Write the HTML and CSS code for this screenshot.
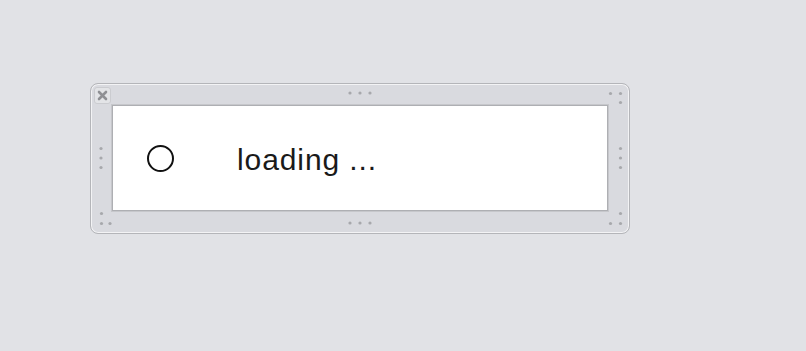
FILE: index.html
```html
<!DOCTYPE html>
<html>
<head>
<meta charset="utf-8">
<link rel="stylesheet" href="styles.css">
</head>
<body>
<div class="panel">
  <div class="cell">
    <button class="close" aria-label="close">
      <svg width="17" height="17" viewBox="0 0 17 17"><path d="M5 5 L12 12 M12 5 L5 12" stroke="#8f9094" stroke-width="2.6" stroke-linecap="round"/></svg>
    </button>
  </div>
  <div class="cell center">
    <svg width="30" height="21" viewBox="0 0 30 21"><g class="dot"><circle cx="5" cy="9" r="1.6"/><circle cx="15" cy="9" r="1.6"/><circle cx="25" cy="9" r="1.6"/></g></svg>
  </div>
  <div class="cell">
    <svg width="21" height="21" viewBox="0 0 21 21"><g class="dot"><circle cx="2.5" cy="9.5" r="1.6"/><circle cx="12.5" cy="9.5" r="1.6"/><circle cx="12.5" cy="18.5" r="1.6"/></g></svg>
  </div>

  <div class="cell middle">
    <svg width="21" height="30" viewBox="0 0 21 30"><g class="dot"><circle cx="10" cy="5.5" r="1.6"/><circle cx="10" cy="15" r="1.6"/><circle cx="10" cy="24.5" r="1.6"/></g></svg>
  </div>
  <div class="content">
    <span class="ring"></span>
    <span class="label">loading ...</span>
  </div>
  <div class="cell middle">
    <svg width="21" height="30" viewBox="0 0 21 30"><g class="dot"><circle cx="12.5" cy="5.5" r="1.6"/><circle cx="12.5" cy="15" r="1.6"/><circle cx="12.5" cy="24.5" r="1.6"/></g></svg>
  </div>

  <div class="cell">
    <svg width="21" height="22" viewBox="0 0 21 22"><g class="dot"><circle cx="10.5" cy="2.5" r="1.6"/><circle cx="10.5" cy="12.5" r="1.6"/><circle cx="19" cy="12.5" r="1.6"/></g></svg>
  </div>
  <div class="cell center bottom">
    <svg width="30" height="22" viewBox="0 0 30 22"><g class="dot"><circle cx="5" cy="12" r="1.6"/><circle cx="15" cy="12" r="1.6"/><circle cx="25" cy="12" r="1.6"/></g></svg>
  </div>
  <div class="cell">
    <svg width="21" height="22" viewBox="0 0 21 22"><g class="dot"><circle cx="12.5" cy="2.5" r="1.6"/><circle cx="2.5" cy="12.5" r="1.6"/><circle cx="12.5" cy="12.5" r="1.6"/></g></svg>
  </div>
</div>
</body>
</html>
```

FILE: styles.css
```css
html, body {
  margin: 0;
  padding: 0;
}
body {
  background: #e1e2e6;
  width: 806px;
  height: 351px;
  overflow: hidden;
  font-family: "Liberation Sans", Arial, sans-serif;
}
.panel {
  box-sizing: border-box;
  margin: 83px 0 0 90px;
  width: 540px;
  height: 151px;
  border: 1px solid #b4b5b9;
  border-radius: 8px;
  box-shadow: inset 0 0 0 1px #f3f3f5;
  background: #d9dadf;
  display: grid;
  grid-template-columns: 21px 1fr 21px;
  grid-template-rows: 21px 1fr 22px;
}
.cell {
  display: flex;
  align-items: flex-start;
  justify-content: flex-start;
}
.cell svg {
  display: block;
}
.cell.center {
  justify-content: center;
}
.cell.middle {
  align-items: center;
}
.dot {
  fill: #a7a8ac;
}
.close {
  margin: 3px 0 0 3px;
  padding: 0;
  width: 17px;
  height: 17px;
  border: 1px solid #cbccd0;
  border-radius: 3px;
  background: #e3e4e7;
  display: flex;
  align-items: center;
  justify-content: center;
  box-sizing: border-box;
}
.close svg {
  flex: none;
}
.content {
  background: #fff;
  border: 1px solid #aeafb3;
  box-shadow: 0 0 0 1px #c6c7cb;
  display: flex;
  align-items: center;
  padding-left: 34px;
}
.ring {
  box-sizing: border-box;
  width: 27px;
  height: 27px;
  border: 2px solid #111;
  border-radius: 50%;
  flex: none;
}
.label {
  margin-left: 63px;
  margin-top: 4px;
  font-size: 30px;
  letter-spacing: 0.9px;
  color: #1a1a1a;
}
```
